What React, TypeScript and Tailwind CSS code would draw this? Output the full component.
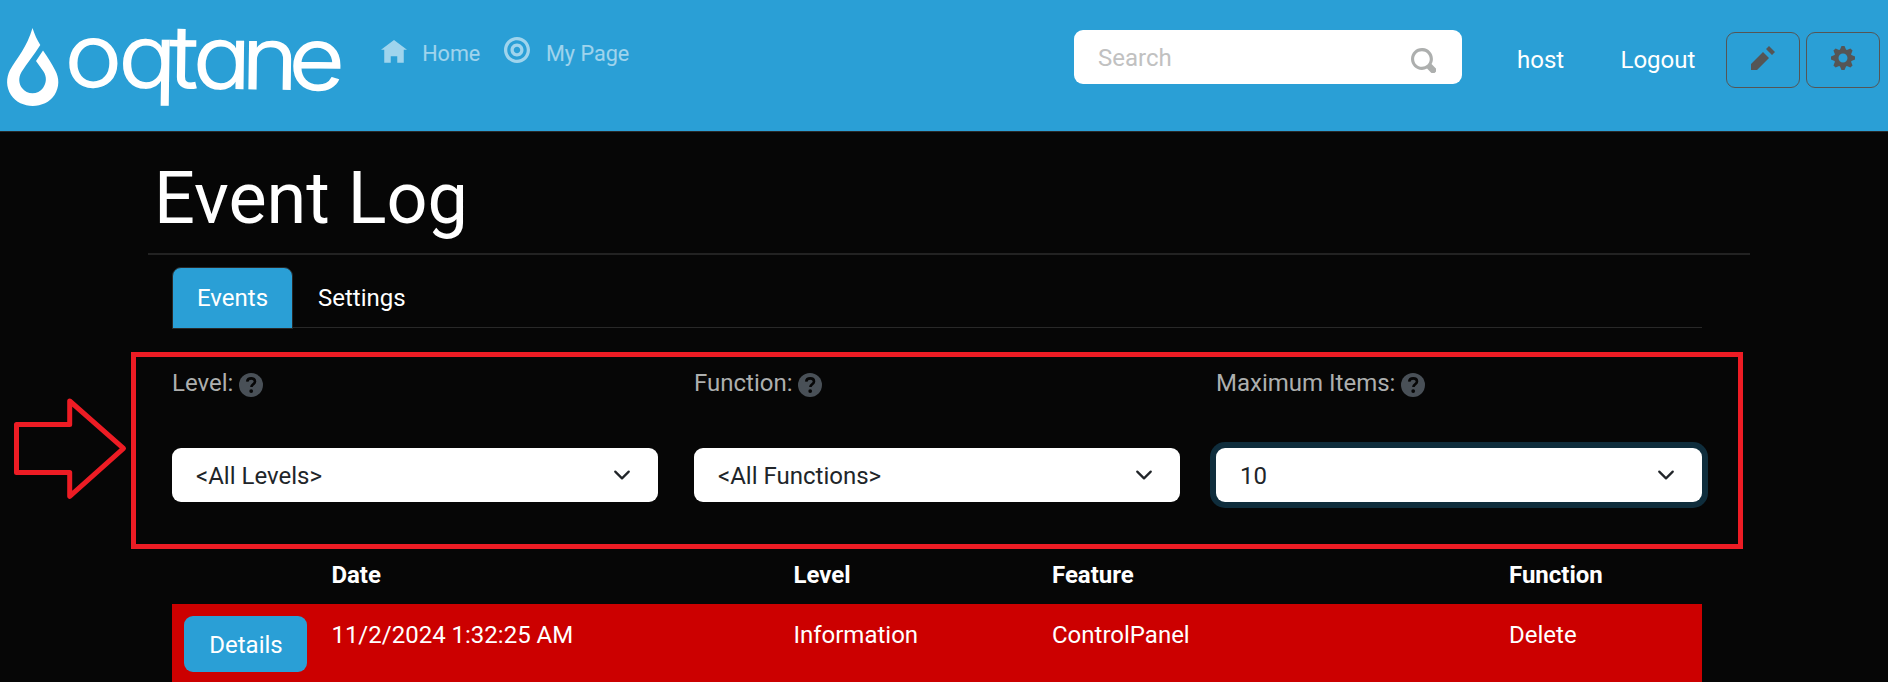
import React from "react";

const ICONS = {
  home: "M4 0l-4 3h1v4h2v-2h2v2h2v-4.03l1 .03-4-3z",
  target:
    "M4 0c-2.2 0-4 1.8-4 4s1.8 4 4 4 4-1.8 4-4-1.8-4-4-4zm0 1c1.66 0 3 1.34 3 3s-1.34 3-3 3-3-1.34-3-3 1.34-3 3-3zm0 1c-1.11 0-2 .9-2 2s.89 2 2 2 2-.9 2-2-.89-2-2-2zm0 1c.56 0 1 .44 1 1s-.44 1-1 1-1-.44-1-1 .44-1 1-1z",
  search:
    "M3.5 0c-1.93 0-3.5 1.57-3.5 3.5s1.57 3.5 3.5 3.5c.59 0 1.17-.14 1.66-.41a1 1 0 0 0 .13.13l1 1a1.02 1.02 0 1 0 1.44-1.44l-1-1a1 1 0 0 0-.16-.13c.27-.49.44-1.06.44-1.66 0-1.93-1.55-3.5-3.5-3.5zm0 1c1.39 0 2.5 1.11 2.5 2.5 0 .66-.24 1.27-.66 1.72-.01.01-.02.02-.03.03a1 1 0 0 0-.13.13c-.44.4-1.04.63-1.69.63-1.39 0-2.5-1.11-2.5-2.5s1.11-2.5 2.5-2.5z",
  pencil: "M6 0l-1 1 2 2 1-1-2-2zm-2 2l-4 4v2h2l4-4-2-2z",
  cog: "M3.5 0l-.5 1.19c-.1.03-.19.08-.28.13l-1.19-.5-.72.72.5 1.19c-.05.1-.09.18-.13.28l-1.19.5v1l1.19.5c.04.1.08.18.13.28l-.5 1.19.72.72 1.19-.5c.09.04.18.09.28.13l.5 1.19h1l.5-1.19c.09-.04.19-.08.28-.13l1.19.5.72-.72-.5-1.19c.04-.09.09-.19.13-.28l1.19-.5v-1l-1.19-.5c-.03-.09-.08-.19-.13-.28l.5-1.19-.72-.72-1.19.5c-.09-.04-.19-.09-.28-.13l-.5-1.19h-1zm.5 2.5c.83 0 1.5.67 1.5 1.5s-.67 1.5-1.5 1.5-1.5-.67-1.5-1.5.67-1.5 1.5-1.5z",
};

function Icon({ name, className }: { name: keyof typeof ICONS; className: string }) {
  return (
    <svg viewBox="0 0 8 8" fill="currentColor" className={className} aria-hidden="true">
      <path d={ICONS[name]} />
    </svg>
  );
}

function Logo() {
  return (
    <svg viewBox="0 0 345 131" className="h-[131px] w-[345px] shrink-0" role="img" aria-label="oqtane">
      <path
        fill="#fff"
        d="M32.500 28C34.500 34 37 40 40.300 45C34 55 27 63 21.500 72C18 78 19 84 22 88C27 95 38 95 43 88C46.500 83 47 77 43.500 71.500L36 61L43 50.500C48 58 52 64 55 70C59.500 78 59.500 87 54.500 95C45 109.500 20.500 109.500 11 95C6 87 6 78 10 70C17 58 27 47 32.500 28Z"
      />
      <text
        fill="#fff"
        stroke="#fff"
        strokeWidth="1.500"
        fontSize="86"
        transform="rotate(0.8 69 87) scale(1.12 1)"
        x="57.500 105.500 151 172 215.500 257.500"
        y="86"
        className="font-['Inter',sans-serif] font-light [font-feature-settings:'cv11']"
      >
        oqtane
      </text>
    </svg>
  );
}

function HelpIcon() {
  return (
    <svg viewBox="0 0 24 24" className="mt-1 size-6" aria-hidden="true">
      <circle cx="12" cy="12" r="12" fill="#495057" />
      <path
        d="M8.200 8.700C8.400 6.600 10 5.400 12.200 5.400c2.200 0 3.800 1.200 3.800 3.100 0 2.700-3.600 2.800-3.600 5.500"
        fill="none"
        stroke="#060606"
        strokeWidth="2.600"
      />
      <circle cx="12.200" cy="18.100" r="1.900" fill="#060606" />
    </svg>
  );
}

function Filter({ label, value, focused = false }: { label: string; value: string; focused?: boolean }) {
  return (
    <div className="flex flex-col">
      <div className="flex h-9 items-center gap-[5.5px] text-[#adafae]">
        <span>{label}</span>
        <HelpIcon />
      </div>
      <div
        className={
          focused
            ? "mt-[47px] flex h-[54px] items-center justify-between rounded-[9px] bg-white pr-7 pl-6 text-[#212529] ring-[6px] ring-[#0f2d3c]"
            : "mt-[47px] flex h-[54px] items-center justify-between rounded-[9px] bg-white pr-7 pl-6 text-[#212529]"
        }
      >
        <span className="pt-[2px]">{value}</span>
        <svg viewBox="0 0 16 16" className="mr-[-1px] size-[18px]" fill="none" aria-hidden="true">
          <path d="m2 5 6 6 6-6" stroke="#212529" strokeWidth="2" strokeLinecap="round" strokeLinejoin="round" />
        </svg>
      </div>
    </div>
  );
}

const COLUMNS = "grid grid-cols-[147.4px_462px_258.6px_457px_1fr] pl-3";

export default function App() {
  return (
    <div className="relative h-[682px] w-[1888px] overflow-hidden bg-[#060606] font-['Roboto',sans-serif] text-[24px] leading-9 text-white">
      <header className="flex h-[132px] items-start border-b border-[#282828] bg-[#2a9fd6]">
        <Logo />
        <nav className="flex items-start pt-9 pl-9 text-[21.6px] text-white/55">
          <a className="flex">
            <Icon name="home" className="mt-1 mr-[15.2px] size-[26px]" />
            Home
          </a>
          <a className="ml-6 flex">
            <Icon name="target" className="mt-px mr-[15.7px] size-[26px]" />
            My Page
          </a>
        </nav>
        <div className="ml-auto flex pr-2">
          <div className="mt-[30px] flex h-[54px] w-[388px] items-center justify-between rounded-[9px] bg-white pr-[26px] pl-6 text-[#c1c1c1]">
            <span className="pt-[2px]">Search</span>
            <Icon name="search" className="mt-[6px] size-[25px] text-[#adafae]" />
          </div>
          <span className="mt-[42px] ml-[55px] w-[103.5px]">host</span>
          <span className="mt-[42px] w-[105.5px]">Logout</span>
          <button className="mt-8 mr-[6px] flex h-14 w-[74px] justify-center rounded-[9px] border border-[#555] pt-[13px]">
            <Icon name="pencil" className="size-6 text-[#555]" />
          </button>
          <button className="mt-8 flex h-14 w-[74px] justify-center rounded-[9px] border border-[#555] pt-[13px]">
            <Icon name="cog" className="size-6 text-[#555]" />
          </button>
        </div>
      </header>

      <main className="ml-[148px] w-[1602px]">
        <h1 className="h-[123px] border-b-2 border-[#222] pt-6 pl-[6px] text-[72px] leading-[86px]">Event Log</h1>

        <div className="ml-6 w-[1530px]">
          <div className="mt-3 flex h-[61px] border-b border-[#282828]">
            <div className="h-[62px] w-[121px] shrink-0 rounded-t-[9px] border border-[#282828] bg-[#2a9fd6] pt-3 text-center">
              Events
            </div>
            <div className="pt-[13px] pl-[25px]">Settings</div>
          </div>

          <section className="mt-[37px] grid grid-cols-3 gap-x-9">
            <Filter label="Level:" value="<All Levels>" />
            <Filter label="Function:" value="<All Functions>" />
            <Filter label="Maximum Items:" value="10" focused />
          </section>

          <div className="mt-[42px]">
            <div className={COLUMNS + " h-[60px] pt-[13px] font-bold"}>
              <span />
              <span>Date</span>
              <span>Level</span>
              <span>Feature</span>
              <span>Function</span>
            </div>
            <div className={COLUMNS + " h-[81px] bg-[#cc0000] pt-3"}>
              <button className="flex h-14 w-[123px] items-center justify-center rounded-[9px] bg-[#2a9fd6] pt-[2px] pl-px">
                Details
              </button>
              <span className="pt-px">11/2/2024 1:32:25 AM</span>
              <span className="pt-px">Information</span>
              <span className="pt-px">ControlPanel</span>
              <span className="pt-px">Delete</span>
            </div>
          </div>
        </div>
      </main>

      <div className="pointer-events-none absolute top-[352px] left-[131px] h-[197px] w-[1612px] border-5 border-[#ed1c24]" />
      <svg
        viewBox="0 0 130 110"
        className="pointer-events-none absolute top-[395px] left-0 h-[110px] w-[130px]"
        fill="none"
        aria-hidden="true"
      >
        <path
          d="M16.500 29.500H69.700V6L123.500 53.300L69.700 101.300V77.500H16.500Z"
          stroke="#ed1c24"
          strokeWidth="5"
          strokeLinejoin="round"
        />
      </svg>
    </div>
  );
}
